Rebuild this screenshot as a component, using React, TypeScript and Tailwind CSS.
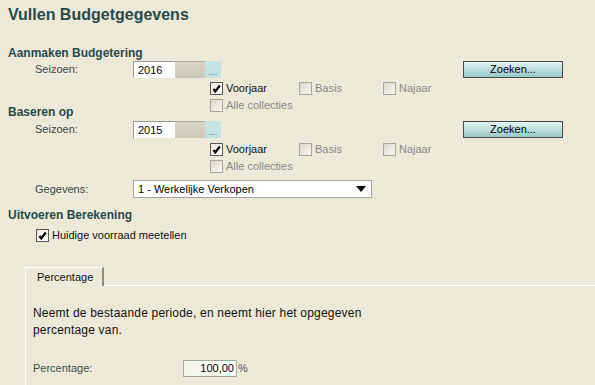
import React from "react";

const Check = ({ checked, label, muted }: { checked?: boolean; label: string; muted?: boolean }) => (
  <div className="flex items-center h-[13px]">
    <div
      className={
        "w-[13px] h-[13px] border flex items-center justify-center shrink-0 " +
        (checked
          ? "border-[#5a5a5a] bg-gradient-to-br from-[#e8e6dc] to-[#ffffff]"
          : "border-[#a8a8a0] bg-gradient-to-br from-[#dcd9cc] to-[#f6f5f0]")
      }
    >
      {checked && (
        <svg width="11" height="11" viewBox="0 0 11 11">
          <path d="M2.5 6 L4.3 8.5 L8.8 2.5" fill="none" stroke="#000" strokeWidth="2.2" strokeLinecap="butt" />
        </svg>
      )}
    </div>
    <span className={"ml-[3px] text-[11px] leading-[13px] " + (muted ? "text-[#8a8a8a]" : "text-[#111]")}>{label}</span>
  </div>
);

const ZoekBtn = () => (
  <div className="ml-auto mr-[32px] w-[100px] h-[17px] border border-[#4a4a4a] bg-gradient-to-b from-[#e4f3f2] to-[#98c8c6] flex items-center justify-center text-[11px] text-black">
    Zoeken...
  </div>
);

const SeizoenRow = ({ year }: { year: string }) => (
  <div className="flex items-center h-[17px]">
    <span className="ml-[35px] w-[98px] text-[11px] text-[#3a4848]">Seizoen:</span>
    <div className="flex h-[17px]">
      <div className="w-[42px] bg-white border-l border-t border-[#9a9a9a] text-[11px] leading-[16px] pl-[4px] text-black">{year}</div>
      <div className="w-[30px] bg-gradient-to-b from-[#d8d4c6] to-[#cdc9ba] border-t border-[#b0ad9f]"></div>
      <div className="w-[16px] bg-[#c6e2e1] flex items-end justify-center text-[10px] leading-[12px] text-[#2f8c8c]">...</div>
    </div>
    <ZoekBtn />
  </div>
);

const Checks = ({ top }: { top: string }) => (
  <>
    <div className={"flex items-center " + top}>
      <div className="ml-[210px] w-[89px]"><Check checked label="Voorjaar" /></div>
      <div className="w-[84px]"><Check label="Basis" muted /></div>
      <Check label="Najaar" muted />
    </div>
    <div className="flex items-center mt-[4px] ml-[210px]">
      <Check label="Alle collecties" muted />
    </div>
  </>
);

export default function App() {
  return (
    <div className="w-[595px] h-[385px] overflow-hidden bg-[#ece9d8] font-['Liberation_Sans',Arial,sans-serif] flex flex-col">
      <div className="h-[30px] leading-[30px] pl-[8px] text-[16px] font-bold text-[#294a4c]">Vullen Budgetgegevens</div>
      <div className="mt-[16px] h-[14px] leading-[14px] pl-[8px] text-[12px] font-bold text-[#294a4c]">Aanmaken Budgetering</div>
      <div className="mt-[1px]"><SeizoenRow year="2016" /></div>
      <Checks top="mt-[4px]" />
      <div className="mt-[-7px] h-[14px] leading-[14px] pl-[8px] text-[12px] font-bold text-[#294a4c]">Baseren op</div>
      <div className="mt-[2px]"><SeizoenRow year="2015" /></div>
      <Checks top="mt-[5px]" />
      <div className="mt-[7px] flex items-center h-[18px]">
        <span className="ml-[35px] w-[98px] text-[11px] text-[#3a4848]">Gegevens:</span>
        <div className="w-[239px] h-[18px] bg-white border border-[#a5a5a0] flex items-center pl-[4px] pr-[5px] text-[11px] text-black">
          <span>1 - Werkelijke Verkopen</span>
          <svg className="ml-auto" width="10" height="6" viewBox="0 0 10 6">
            <path d="M0 0 H10 L5 6 Z" fill="#000" />
          </svg>
        </div>
      </div>
      <div className="mt-[10px] h-[14px] leading-[14px] pl-[8px] text-[12px] font-bold text-[#294a4c]">Uitvoeren Berekening</div>
      <div className="mt-[7px] ml-[36px]"><Check checked label="Huidige voorraad meetellen" /></div>
      <div className="mt-[25px] ml-[25px] flex flex-col flex-1">
        <div className="flex h-[19px]">
          <div className="w-[79px] border-l border-t border-white border-r-2 border-r-[#8e8c84] text-[11px] leading-[18px] pl-[11px] text-[#111]">Percentage</div>
          <div className="flex-1 border-b border-white"></div>
        </div>
        <div className="flex-1 border-l border-white pl-[7px]">
          <div className="mt-[19px] text-[12px] leading-[17px] tracking-[0.2px] text-[#111] w-[345px]">
            Neemt de bestaande periode, en neemt hier het opgegeven percentage van.
          </div>
          <div className="mt-[21px] flex items-center h-[17px]">
            <span className="w-[150px] text-[11px] text-[#3a5050]">Percentage:</span>
            <div className="w-[54px] h-[17px] border border-[#a5a5a0] bg-gradient-to-r from-[#f4f4e8] to-white text-right pr-[2px] text-[11px] leading-[15px] text-black">100,00</div>
            <span className="ml-[1px] text-[11px] text-[#555]">%</span>
          </div>
        </div>
      </div>
    </div>
  );
}
